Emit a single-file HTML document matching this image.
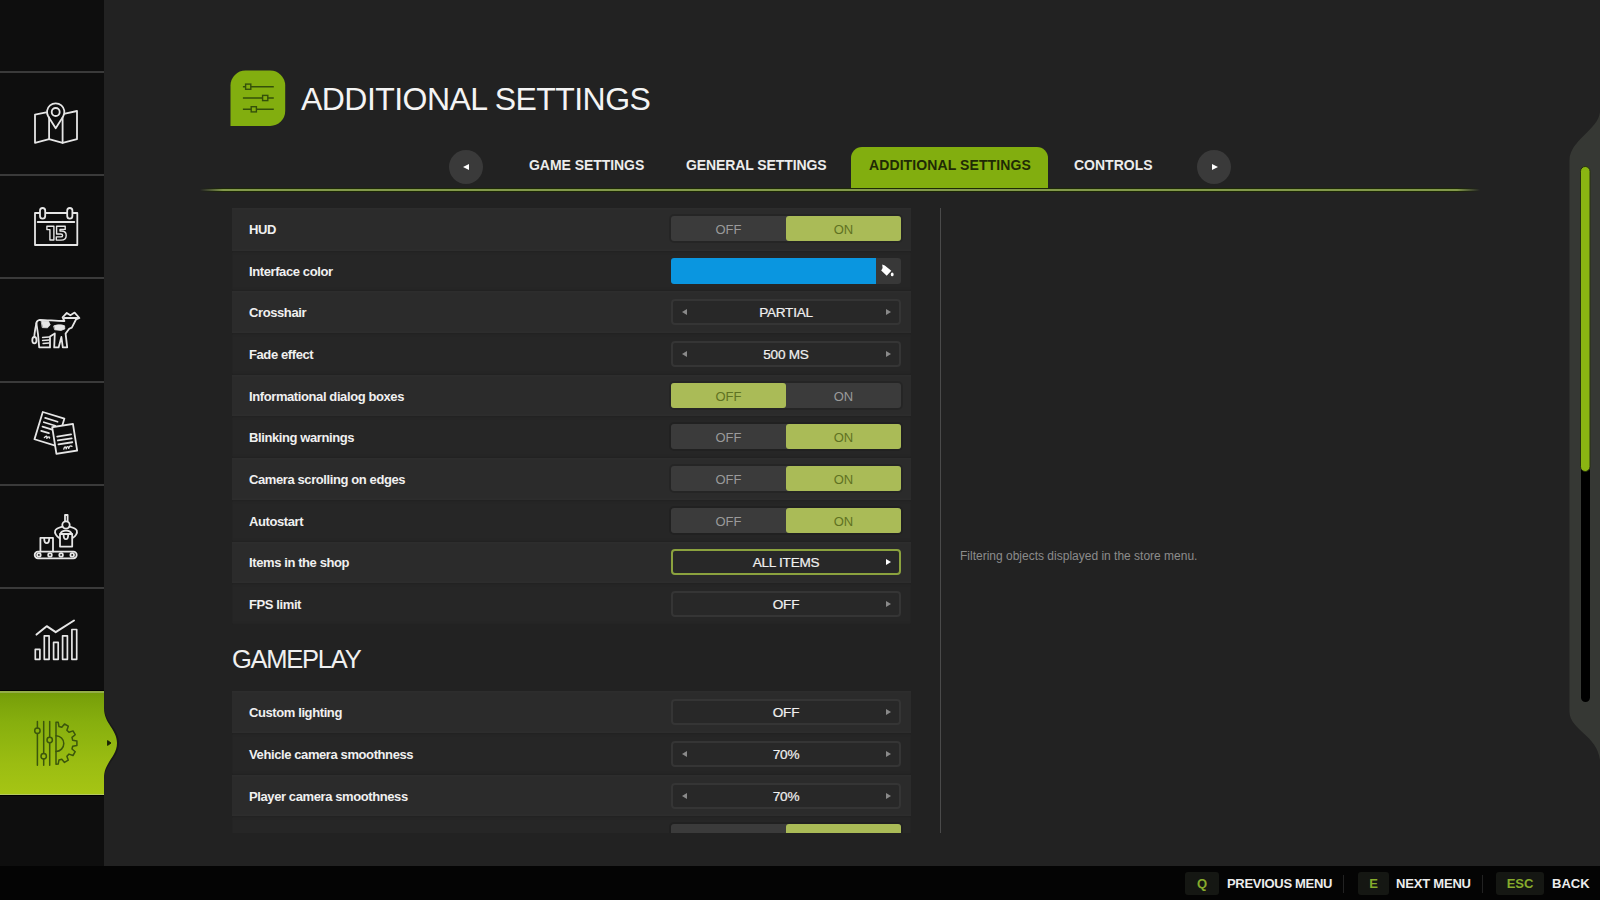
<!DOCTYPE html>
<html><head><meta charset="utf-8">
<style>
*{margin:0;padding:0;box-sizing:border-box}
html,body{width:1600px;height:900px;overflow:hidden;background:#222222;font-family:"Liberation Sans",sans-serif;color:#fff}
#side{position:absolute;left:0;top:0;width:104px;height:866px;background:#0e0e0e}
.div{position:absolute;left:0;width:104px;height:2px;background:#3a3a3a}
#seltab{position:absolute;left:0;top:0;}
#bottom{position:absolute;left:0;top:866px;width:1600px;height:34px;background:#040404}
#title{position:absolute;left:301px;top:81px;font-size:32px;letter-spacing:-0.55px;color:#f4f4f4;white-space:nowrap}
.tab{position:absolute;top:157px;font-size:14px;font-weight:bold;color:#ececec;white-space:nowrap}
.circ{position:absolute;width:34px;height:34px;border-radius:50%;background:#3a3a3a}
.circ i{position:absolute;top:14px;width:0;height:0;border-top:3.5px solid transparent;border-bottom:3.5px solid transparent}
#gline{position:absolute;left:200px;top:188px;width:1280px;height:4px;background:linear-gradient(90deg,rgba(34,34,34,1) 0%,rgba(34,34,34,0) 1.8%,rgba(34,34,34,0) 98.2%,rgba(34,34,34,1) 100%),linear-gradient(#1e2a06 0,#1e2a06 1px,#83994c 1px,#83994c 3px,#1c2804 3px,#1c2804 4px)}
#acttab{position:absolute;left:851px;top:147px;width:197px;height:42px;background:#82ae0f;border-radius:11px 11px 0 0}
#list{position:absolute;left:0;top:0;width:1600px;height:833px;overflow:hidden}
.row{position:absolute;left:232px;width:679px;height:42px}
.r1{background:#2b2b2b;box-shadow:inset 0 3px 3px -2px rgba(255,255,255,0.025),inset 0 -3px 3px -2px rgba(255,255,255,0.025)}
.r2{background:#262626;box-shadow:inset 0 3px 3px -2px rgba(0,0,0,0.15),inset 0 -3px 3px -2px rgba(0,0,0,0.15)}
.lab{position:absolute;left:17px;top:14px;font-size:13px;font-weight:bold;color:#f0f0f0;white-space:nowrap;letter-spacing:-0.4px}
.tog{position:absolute;left:439px;top:8px;width:230px;height:25px;border-radius:3px;background:#3b3b3b;box-shadow:0 0 0 2px rgba(0,0,0,0.12);font-size:13px;color:#9a9a9a}
.tog span{position:absolute;top:0;height:25px;width:115px;text-align:center;padding-top:6px}
.tog .l{left:0}.tog .r{left:115px}
.tog .on{background:#aabb57;border-radius:3px;color:#5f7222}
.sel{position:absolute;left:439px;top:8px;width:230px;height:26px;border-radius:4px;border:2px solid #353535;background:#282828;font-size:13px;color:#f0f0f0;text-align:center}
.sel b{font-weight:normal;position:absolute;left:0;right:0;top:3.5px;font-size:13.6px;letter-spacing:-0.25px;-webkit-text-stroke:0.2px #f0f0f0}
.sel.g{border-color:#8ba23e}
.arl{position:absolute;left:9px;top:8px;width:0;height:0;border-top:3.5px solid transparent;border-bottom:3.5px solid transparent;border-right:5px solid #8a8a8a}
.arr{position:absolute;right:8px;top:8px;width:0;height:0;border-top:3.5px solid transparent;border-bottom:3.5px solid transparent;border-left:5.5px solid #8a8a8a}
.sel.g .arr{border-left-color:#fff}
.colbar{position:absolute;left:439px;top:8px;width:205px;height:26px;background:#0a96e0;border-radius:3px 0 0 3px}
.colbtn{position:absolute;left:644px;top:8px;width:25px;height:26px;background:#383838;border-radius:0 3px 3px 0}
.colbtn svg{position:absolute;left:0;top:0}
#vline{position:absolute;left:940px;top:208px;width:1px;height:625px;background:#4a4a4a}
#help{position:absolute;left:961px;top:549px;font-size:12px;letter-spacing:0px;left:960px;color:#8c8c8c;white-space:nowrap}
#gp{position:absolute;left:232px;top:645px;font-size:25.5px;letter-spacing:-1.25px;color:#f0f0f0;white-space:nowrap}
.key{position:absolute;top:872px;height:23px;background:#151713;border-radius:3px;color:#86ab2c;font-weight:bold;font-size:13px;text-align:center;padding-top:4px}
.bt{position:absolute;top:876px;font-size:13px;font-weight:bold;color:#ececec;white-space:nowrap}
.bsep{position:absolute;top:875px;width:1px;height:18px;background:#222}
</style></head><body>
<div id="side">
  <div class="div" style="top:71px"></div>
  <div class="div" style="top:174px"></div>
  <div class="div" style="top:277px"></div>
  <div class="div" style="top:381px"></div>
  <div class="div" style="top:484px"></div>
  <div class="div" style="top:587px"></div>
</div>
<svg id="seltab" width="130" height="866" viewBox="0 0 130 866">
 <defs><linearGradient id="gg" x1="0" y1="0" x2="0" y2="1">
  <stop offset="0" stop-color="#729a08"/><stop offset="0.08" stop-color="#7aa20a"/><stop offset="0.3" stop-color="#87af0e"/><stop offset="0.7" stop-color="#9bbd12"/><stop offset="1" stop-color="#a6c514"/></linearGradient></defs>
 <path d="M104 706 C104 722, 119 728, 119 743 C119 758, 104 764, 104 780 Z" fill="#161616" opacity="0.7"/>
 <path d="M0 691 H104 V708 C104 724, 117 729, 117 743 C117 757, 104 762, 104 778 V795 H0 Z" fill="url(#gg)"/>
 <rect x="0" y="690" width="104" height="1" fill="#000"/><rect x="0" y="691" width="104" height="2" fill="#94ad48"/><rect x="0" y="794" width="104" height="1" fill="#b5c860"/><rect x="0" y="795" width="104" height="1" fill="#000"/>
 <path d="M107.6 740.6 L111 743 L107.6 745.4 Z" fill="#1a2405" stroke="#1a2405" stroke-width="1" stroke-linejoin="round"/>
</svg>

<svg id="sideicons" width="120" height="866" viewBox="0 0 120 866" style="position:absolute;left:0;top:0">
<g fill="none" stroke="#e6e6e6" stroke-width="1.8" stroke-linejoin="round" stroke-linecap="round">
 <!-- map -->
 <path d="M46.2 112.3 L35 114.6 V142.8 L49.1 139.2 L62.6 142.8 L77 139.2 V111 L65 113.6"/>
 <path d="M49.1 139.2 V117.4 M62.6 142.8 V117.4"/>
 <path d="M48.3 116.6 A8.7 8.7 0 1 1 63.1 116.6 L55.7 128.2 Z"/>
 <circle cx="55.7" cy="112" r="4"/>
 <!-- calendar -->
 <rect x="35" y="213" width="42.3" height="32" />
 <path d="M37.7 222 H74.3"/>
 <rect x="40" y="208" width="5.2" height="10.6" rx="2.6" fill="#0e0e0e"/>
 <rect x="67.2" y="208" width="5.2" height="10.6" rx="2.6" fill="#0e0e0e"/>
 <g transform="translate(26,200)" stroke-width="1.4"><path d="M20.9 26.3 H27.9 V40 H23.9 V29.6 H20.9 Z"/><path d="M30.6 26.2 H39.2 V29.4 H34 V31 H35.4 C38.6 31, 40.2 32.8, 40.2 35.4 C40.2 38.3, 38.2 40.1, 35 40.1 H30.3 V36.9 H34.9 C36 36.9, 36.6 36.3, 36.6 35.4 C36.6 34.5, 36 34, 34.9 34 H30.6 Z"/></g>
 <!-- cow -->
 <g transform="translate(26,303)">
 <path d="M13.8 16.8 C22 17, 32 18.2, 38.4 18 L36.6 14.4 L40.8 9.9 L44.4 12.3 L48.6 9.6 L53.4 15 L50 16.5 L45.8 24.6 L43.2 25.8 L39.6 30.6 L41.2 44.4 L36.8 44.4 L35.4 34 L32.6 44.4 L28.2 44.4 L28.8 30.5 C27 31.5, 25.5 32.5, 24 33.6 L24 44.4 L13.2 44.4 L12 31.2 L10.3 20 C10.8 18, 12 17, 13.8 16.8 Z"/>
 <path d="M10.4 20.5 C 9.2 26, 8.4 30.5, 8.3 34"/>
 <ellipse cx="8.4" cy="37.2" rx="2.1" ry="3.2"/>
 <path d="M15.5 18 L22.5 18.3 L24.2 21.8 L21.5 24.8 L16.6 24.6 Z M28 22.8 C31 21.5, 36 21.5, 38.6 22.8 L38.8 26 L35 27.4 L29 26.8 Z" fill="#e6e6e6" stroke-width="0.8"/>
 <path d="M16.5 34.5 L23 34 M16.5 37.5 L23 37 M17 40.5 L23 40" stroke-width="1.3"/>
 <path d="M38.5 15 H51.5"/>
 </g>
 <!-- docs -->
 <g transform="translate(26,406)">
  <g transform="translate(16.8,6) rotate(17)">
   <rect x="0" y="0" width="22.6" height="28.5" fill="#0e0e0e"/>
   <path d="M4 5 H17 M4 9.5 H16 M4 14 H15 M4 18.5 H12"/><path d="M9 24 C10 21.5, 11.5 21.5, 11.5 24 C12.5 21.5, 14 21.5, 14 23" stroke-width="1.4"/>
  </g>
  <g transform="translate(26.2,21.2) rotate(-9)">
   <rect x="0" y="0" width="21" height="27" fill="#0e0e0e"/>
   <path d="M3.5 10 H17.5 M3.5 14 H17.5 M3.5 18 H17.5"/>
   <path d="M8 23.5 C9 21, 10.5 21, 10.5 23.5 C11.5 21, 13 21, 13 23.5 C 14 21, 15.5 21, 16.5 22" stroke-width="1.4"/>
  </g>
 </g>
 <!-- production -->
 <g transform="translate(26,510)">
  <rect x="8.7" y="41.7" width="42" height="6.6" rx="3.3"/>
  <circle cx="12.9" cy="44.9" r="1.8"/><circle cx="24" cy="44.9" r="1.8"/><circle cx="35.1" cy="44.9" r="1.8"/><circle cx="46.2" cy="44.9" r="1.8"/>
  <path d="M14.4 41.5 V27.8 H27 V41.5"/>
  <path d="M18.2 28.2 C18.2 34.8, 23.2 34.8, 23.2 28.2"/>
  <rect x="34" y="24" width="12.2" height="12.6"/>
  <path d="M37.6 24.4 C37.6 30.8, 42.2 30.8, 42.2 24.4"/>
  <path d="M39 11 V5 H41.6 V11"/>
  <circle cx="40" cy="15" r="3.7"/>
  <path d="M36.6 16.6 C33 17.5, 30 18.5, 29.2 20.5 C28.3 23, 30.5 26.5, 33.5 28.2"/>
  <path d="M43.4 16.6 C47 17.5, 50 18.5, 50.8 20.5 C51.7 23, 49.5 26.5, 46.6 28"/>
  <path d="M34.4 24 C35 21.5, 37 20.6, 40 20.6 C43 20.6, 45 21.5, 45.6 24"/>
 </g>
 <!-- chart -->
 <g transform="translate(26,613)" stroke-width="1.7">
  <rect x="9.3" y="36.3" width="4.6" height="10"/>
  <rect x="18.3" y="22.8" width="4.8" height="23.5"/>
  <rect x="27.6" y="29.4" width="4.6" height="16.9"/>
  <rect x="36.6" y="22.8" width="4.8" height="23.5"/>
  <rect x="45.9" y="16.5" width="4.8" height="29.8"/>
  <path d="M10.5 21.6 L20.7 13.2 L29.7 19.2 L48 7.5" stroke-width="2"/>
 </g>
 <!-- settings (dark) -->
 <g transform="translate(26,716)" stroke="#3b560c" stroke-width="1.5">
  <path d="M11.4 5.4 V12 M11.4 17.4 V49.2 M17.7 5.4 V37.5 M17.7 42.9 V49.2 M23.7 5.4 V21.3 M23.7 26.7 V49.2"/>
  <circle cx="11.4" cy="14.7" r="2.7"/><circle cx="17.7" cy="40.2" r="2.7"/><circle cx="23.7" cy="24" r="2.7"/>
  <path d="M30.0 6.2 L32.2 6.3 L33.0 10.5 L35.8 11.2 L38.5 8.0 L42.3 10.2 L40.9 14.2 L43.0 16.3 L47.0 14.9 L49.2 18.7 L46.0 21.4 L46.7 24.2 L50.9 25.0 L50.9 29.4 L46.7 30.2 L46.0 33.0 L49.2 35.7 L47.0 39.5 L43.0 38.1 L40.9 40.2 L42.3 44.2 L38.5 46.4 L35.8 43.2 L33.0 43.9 L32.2 48.1 L30.0 48.2 Z"/>
  <path d="M30 19.8 A7.8 7.8 0 0 1 30 35.4"/>
 </g>
</g>
</svg>
<div id="bottom"></div>

<svg width="60" height="60" style="position:absolute;left:226px;top:66px" viewBox="226 66 60 60">
 <path d="M230.5 125.9 V85.5 A15 15 0 0 1 245.5 70.5 H270.2 A15 15 0 0 1 285.2 85.5 V110.9 A15 15 0 0 1 270.2 125.9 Z" fill="#82ae0f"/>
 <g stroke="#34500a" stroke-width="1.4" fill="none">
  <path d="M242.9 86.7 H245.6 M250.8 86.7 H273.8 M242.9 98 H262.6 M267.8 98 H273.8 M242.9 109.3 H251.2 M256.4 109.3 H273.8"/>
  <rect x="245.6" y="84.1" width="5.2" height="5.2"/>
  <rect x="262.6" y="95.4" width="5.2" height="5.2"/>
  <rect x="251.2" y="106.7" width="5.2" height="5.2"/>
 </g>
</svg>
<div id="title">ADDITIONAL SETTINGS</div>

<div id="acttab"></div>
<div id="gline"></div>
<div class="circ" style="left:449px;top:150px"><i style="left:14px;border-right:6px solid #fff"></i></div>
<div class="circ" style="left:1197px;top:150px"><i style="left:15px;border-left:6px solid #fff"></i></div>
<div class="tab" style="left:529px;letter-spacing:-0.05px">GAME SETTINGS</div>
<div class="tab" style="left:686px;letter-spacing:-0.1px">GENERAL SETTINGS</div>
<div class="tab" style="left:869px;color:#1f2a05;letter-spacing:0.1px">ADDITIONAL SETTINGS</div>
<div class="tab" style="left:1074px;letter-spacing:0px">CONTROLS</div>

<div id="list">
<div class="row r1" style="top:208px;height:43px"><div class="lab" style="top:14px">HUD</div><div style="position:absolute;left:0;top:0px;width:100%;height:42px"><div class="tog"><span class="l">OFF</span><span class="on r">ON</span></div></div></div>
<div class="row r2" style="top:251px;height:40px"><div class="lab" style="top:13px">Interface color</div><div style="position:absolute;left:0;top:-1px;width:100%;height:42px"><div class="colbar"></div><div class="colbtn"><svg width="25" height="26" viewBox="0 0 25 26"><path d="M6.2 6.6 L8.8 7.6 L15.3 12.8 L10.7 17.8 L5.2 12.4 L6.6 10 Z" fill="#fff"/><ellipse cx="16.2" cy="16.4" rx="1.4" ry="1.9" fill="#fff"/></svg></div></div></div>
<div class="row r1" style="top:291px;height:42px"><div class="lab" style="top:14px">Crosshair</div><div style="position:absolute;left:0;top:0px;width:100%;height:42px"><div class="sel"><i class="arl"></i><b>PARTIAL</b><i class="arr"></i></div></div></div>
<div class="row r2" style="top:333px;height:42px"><div class="lab" style="top:14px">Fade effect</div><div style="position:absolute;left:0;top:0px;width:100%;height:42px"><div class="sel"><i class="arl"></i><b>500 MS</b><i class="arr"></i></div></div></div>
<div class="row r1" style="top:375px;height:41px"><div class="lab" style="top:14px">Informational dialog boxes</div><div style="position:absolute;left:0;top:0px;width:100%;height:42px"><div class="tog"><span class="on l">OFF</span><span class="r">ON</span></div></div></div>
<div class="row r2" style="top:416px;height:42px"><div class="lab" style="top:14px">Blinking warnings</div><div style="position:absolute;left:0;top:0px;width:100%;height:42px"><div class="tog"><span class="l">OFF</span><span class="on r">ON</span></div></div></div>
<div class="row r1" style="top:458px;height:42px"><div class="lab" style="top:14px">Camera scrolling on edges</div><div style="position:absolute;left:0;top:0px;width:100%;height:42px"><div class="tog"><span class="l">OFF</span><span class="on r">ON</span></div></div></div>
<div class="row r2" style="top:500px;height:42px"><div class="lab" style="top:14px">Autostart</div><div style="position:absolute;left:0;top:0px;width:100%;height:42px"><div class="tog"><span class="l">OFF</span><span class="on r">ON</span></div></div></div>
<div class="row r1" style="top:542px;height:41px"><div class="lab" style="top:13px">Items in the shop</div><div style="position:absolute;left:0;top:-1px;width:100%;height:42px"><div class="sel g"><b>ALL ITEMS</b><i class="arr"></i></div></div></div>
<div class="row r2" style="top:583px;height:42px"><div class="lab" style="top:14px">FPS limit</div><div style="position:absolute;left:0;top:0px;width:100%;height:42px"><div class="sel"><b>OFF</b><i class="arr"></i></div></div></div>
<div class="row r1" style="top:691px;height:42px"><div class="lab">Custom lighting</div><div class="sel"><b>OFF</b><i class="arr"></i></div></div>
<div class="row r2" style="top:733px;height:42px"><div class="lab">Vehicle camera smoothness</div><div class="sel"><i class="arl"></i><b>70%</b><i class="arr"></i></div></div>
<div class="row r1" style="top:775px;height:41px"><div class="lab">Player camera smoothness</div><div class="sel"><i class="arl"></i><b>70%</b><i class="arr"></i></div></div>
<div class="row r2" style="top:816px;height:42px"><div class="lab">Tire tracks in fields</div><div class="tog"><span class="l">OFF</span><span class="on r">ON</span></div></div>
</div>
<div id="vline"></div>
<div id="help">Filtering objects displayed in the store menu.</div>
<div id="gp">GAMEPLAY</div>

<svg width="40" height="700" viewBox="1560 100 40 700" style="position:absolute;left:1560px;top:100px">
 <path d="M1600 112 C1598 130, 1570 140, 1569.5 160 V712 C1570 730, 1597 735, 1600 760 Z" fill="#363834"/>
 <rect x="1581" y="466" width="9" height="236" rx="4.5" fill="#000"/>
 <rect x="1580.5" y="166.5" width="9.5" height="305" rx="4.75" fill="#8ab512" stroke="#26300f" stroke-width="1"/>
</svg>

<div class="key" style="left:1185px;width:34px">Q</div>
<div class="bt" style="left:1227px;letter-spacing:-0.3px">PREVIOUS MENU</div>
<div class="bsep" style="left:1343px"></div>
<div class="key" style="left:1358px;width:31px">E</div>
<div class="bt" style="left:1396px;letter-spacing:-0.2px">NEXT MENU</div>
<div class="bsep" style="left:1482px"></div>
<div class="key" style="left:1496px;width:48px">ESC</div>
<div class="bt" style="left:1552px">BACK</div>
</body></html>
